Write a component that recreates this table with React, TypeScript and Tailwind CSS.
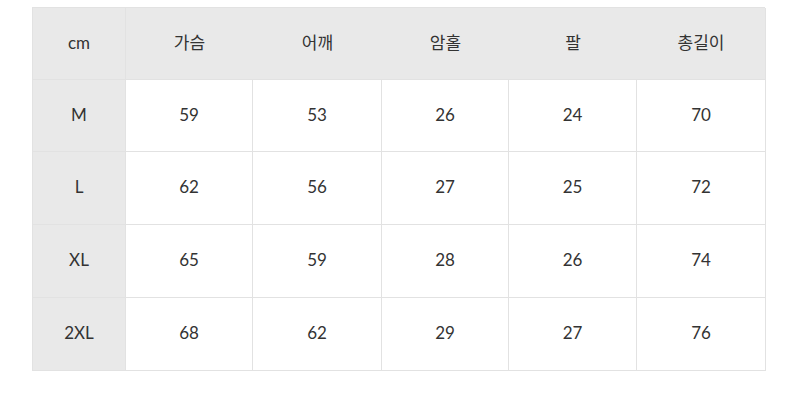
import React from "react";

const headers = ["cm", "가슴", "어깨", "암홀", "팔", "총길이"];
const rows = [
  ["M", "59", "53", "26", "24", "70"],
  ["L", "62", "56", "27", "25", "72"],
  ["XL", "65", "59", "28", "26", "74"],
  ["2XL", "68", "62", "29", "27", "76"],
];
const rowH = ["h-[72px]", "h-[73px]", "h-[73px]", "h-[73px]"];

export default function App() {
  return (
    <div
      className="w-[800px] h-[417px] bg-white pt-[7px] pl-[32px] text-[#333333]"
      style={{ fontFamily: 'Lato, "Noto Sans CJK KR", sans-serif' }}
    >
      <div className="w-[733px] grid grid-cols-[93px_127px_129px_127px_128px_129px] border-t border-l border-[#e2e2e2] text-[17px] font-normal">
        {headers.map((h, i) => (
          <div
            key={h}
            className={`h-[72px] pb-[2px] flex items-center justify-center bg-[#e9e9e9] border-b border-[#e2e2e2] ${
              i === 0 || i === 5 ? "border-r" : ""
            }`}
          >
            {h}
          </div>
        ))}
        {rows.map((r, ri) =>
          r.map((c, ci) => (
            <div
              key={`${ri}-${ci}`}
              className={`${rowH[ri]} pb-[2px] flex items-center justify-center border-r border-b border-[#e2e2e2] ${
                ci === 0 ? "bg-[#e9e9e9]" : "bg-white"
              }`}
            >
              {c}
            </div>
          ))
        )}
      </div>
    </div>
  );
}
